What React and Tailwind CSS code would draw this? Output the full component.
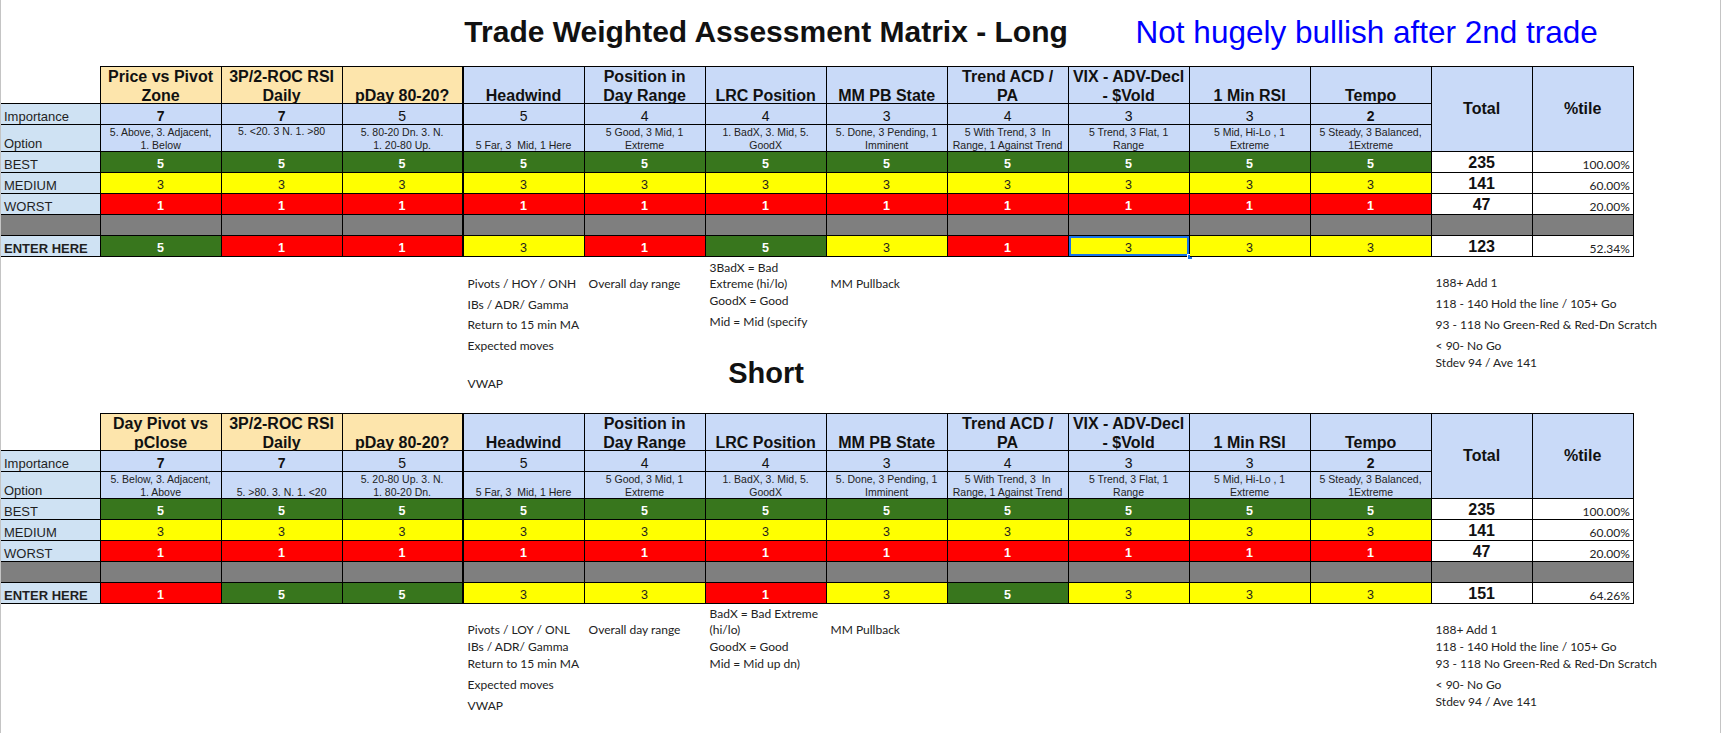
import React from "react";

const GRID = "grid grid-cols-[99.6px_repeat(11,121px)_101px_101.2px]";

const LONG_COLS = [
  { h: ["Price vs Pivot", "Zone"], imp: 7, opt: ["5. Above, 3. Adjacent,", "1. Below"], orange: true },
  { h: ["3P/2-ROC RSI", "Daily"], imp: 7, opt: ["5. <20. 3 N. 1. >80"], top: true, orange: true },
  { h: ["pDay 80-20?"], imp: 5, opt: ["5. 80-20 Dn. 3. N.", "1. 20-80 Up."], orange: true },
  { h: ["Headwind"], imp: 5, opt: ["5 Far, 3  Mid, 1 Here"] },
  { h: ["Position in", "Day Range"], imp: 4, opt: ["5 Good, 3 Mid, 1", "Extreme"] },
  { h: ["LRC Position"], imp: 4, opt: ["1. BadX, 3. Mid, 5.", "GoodX"] },
  { h: ["MM PB State"], imp: 3, opt: ["5. Done, 3 Pending, 1", "Imminent"] },
  { h: ["Trend ACD /", "PA"], imp: 4, opt: ["5 With Trend, 3  In", "Range, 1 Against Trend"] },
  { h: ["VIX - ADV-Decl", "- $Vold"], imp: 3, opt: ["5 Trend, 3 Flat, 1", "Range"] },
  { h: ["1 Min RSI"], imp: 3, opt: ["5 Mid, Hi-Lo , 1", "Extreme"] },
  { h: ["Tempo"], imp: 2, opt: ["5 Steady, 3 Balanced,", "1Extreme"] },
];

const SHORT_COLS = [
  { h: ["Day Pivot vs", "pClose"], imp: 7, opt: ["5. Below, 3. Adjacent,", "1. Above"], orange: true },
  { h: ["3P/2-ROC RSI", "Daily"], imp: 7, opt: ["5. >80. 3. N. 1. <20"], orange: true },
  { h: ["pDay 80-20?"], imp: 5, opt: ["5. 20-80 Up. 3. N.", "1. 80-20 Dn."], orange: true },
  ...LONG_COLS.slice(3),
];

const SCORE = {
  5: "bg-[#38761d] text-white font-bold",
  3: "bg-[#ffff00] text-[#1f1f1f]",
  1: "bg-[#ff0000] text-white font-bold",
};

const ALL5 = [5, 5, 5, 5, 5, 5, 5, 5, 5, 5, 5];
const ALL3 = [3, 3, 3, 3, 3, 3, 3, 3, 3, 3, 3];
const ALL1 = [1, 1, 1, 1, 1, 1, 1, 1, 1, 1, 1];

function LabelCell({ children, bold, gray }) {
  return (
    <div
      className={`flex items-end border-r border-b border-black pl-[3px] text-[13px] leading-[15px] text-[#1f1f1f] ${
        gray ? "bg-[#7f7f7f]" : "bg-[#cfe2f3]"
      } ${bold ? "font-bold" : ""}`}
    >
      {children}
    </div>
  );
}

function rb(i) {
  return i === 2 ? "border-r-2" : "border-r";
}

function ScoreRow({ label, bold, values, total, pct, selected }) {
  return (
    <>
      <LabelCell bold={bold}>{label}</LabelCell>
      {values.map((v, i) => (
        <div
          key={i}
          className={`relative flex items-end justify-center border-b border-black ${rb(i)} text-[12.5px] leading-[15px] ${SCORE[v]}`}
        >
          {v}
          {selected === i && (
            <>
              <div className="pointer-events-none absolute inset-0 border-2 border-[#1a73e8]" />
              <div className="absolute -bottom-[4px] -right-[4px] h-[6px] w-[6px] border border-white bg-[#1a73e8]" />
            </>
          )}
        </div>
      ))}
      <div className="flex items-end justify-center border-r border-b border-black bg-white text-[16px] font-bold leading-[19px] text-[#111]">
        {total}
      </div>
      <div className="flex items-end justify-end border-r border-b border-black bg-white pr-[3px] font-['Lato',sans-serif] text-[12px] leading-[14px] text-[#222]">
        {pct}
      </div>
    </>
  );
}

function Matrix({ cols, enter, total, pct, selected }) {
  return (
    <div
      className={`${GRID} grid-rows-[38.6px_21px_27px_21px_21px_21px_21px_21px] text-[#1f1f1f]`}
    >
      {/* header */}
      <div className="border-r border-b border-black bg-white" />
      {cols.map((c, i) => (
        <div
          key={i}
          className={`flex items-end justify-center border-t border-b border-black ${rb(i)} ${
            c.orange ? "bg-[#fde5ac]" : "bg-[#c9daf8]"
          } text-center text-[16px] font-bold leading-[19px] text-[#111]`}
        >
          <div className="-mb-[1.5px] whitespace-nowrap">
            {c.h.map((l, j) => (
              <div key={j}>{l}</div>
            ))}
          </div>
        </div>
      ))}
      <div className="row-span-3 flex items-center justify-center border-t border-r border-b border-black bg-[#c9daf8] text-[16px] font-bold text-[#111]">
        Total
      </div>
      <div className="row-span-3 flex items-center justify-center border-t border-r border-b border-black bg-[#c9daf8] text-[16px] font-bold text-[#111]">
        %tile
      </div>

      {/* importance */}
      <LabelCell>Importance</LabelCell>
      {cols.map((c, i) => (
        <div
          key={i}
          className={`flex items-end justify-center border-b border-black ${rb(i)} bg-[#c9daf8] text-[14px] leading-[16px] text-[#111] ${
            c.imp === 7 || c.imp === 2 ? "font-bold" : ""
          }`}
        >
          {c.imp}
        </div>
      ))}

      {/* option */}
      <LabelCell>Option</LabelCell>
      {cols.map((c, i) => (
        <div
          key={i}
          className={`flex ${c.top ? "items-start" : "items-end"} justify-center border-b border-black ${rb(i)} bg-[#c9daf8] text-center text-[10.5px] leading-[12.5px] text-[#222]`}
        >
          <div className="whitespace-pre">
            {c.opt.map((l, j) => (
              <div key={j}>{l}</div>
            ))}
          </div>
        </div>
      ))}

      <ScoreRow label="BEST" values={ALL5} total="235" pct="100.00%" />
      <ScoreRow label="MEDIUM" values={ALL3} total="141" pct="60.00%" />
      <ScoreRow label="WORST" values={ALL1} total="47" pct="20.00%" />

      {/* gray spacer row */}
      <LabelCell gray />
      {cols.map((c, i) => (
        <div key={i} className={`border-b border-black ${rb(i)} bg-[#7f7f7f]`} />
      ))}
      <div className="border-r border-b border-black bg-[#7f7f7f]" />
      <div className="border-r border-b border-black bg-[#7f7f7f]" />

      <ScoreRow label="ENTER HERE" bold values={enter} total={total} pct={pct} selected={selected} />
    </div>
  );
}

function Line({ className = "", children }) {
  return <div className={`whitespace-nowrap pl-[4px] leading-[16px] ${className}`}>{children}</div>;
}

function LongNotes() {
  return (
    <div className={`${GRID} h-[155.4px] font-['Lato',sans-serif] text-[12px] text-[#222]`}>
      <div className="col-start-5 row-start-1 flex flex-col">
        <Line className="mt-[18.7px]">Pivots / HOY / ONH</Line>
        <Line className="mt-[5px]">IBs / ADR/ Gamma</Line>
        <Line className="mt-[4px]">Return to 15 min MA</Line>
        <Line className="mt-[5px]">Expected moves</Line>
        <Line className="mt-[22px]">VWAP</Line>
      </div>
      <div className="col-start-6 row-start-1 flex flex-col">
        <Line className="mt-[18.7px]">Overall day range</Line>
      </div>
      <div className="col-start-7 row-start-1 flex flex-col">
        <Line className="mt-[2.7px]">3BadX = Bad</Line>
        <Line>Extreme (hi/lo)</Line>
        <Line className="mt-[1px]">GoodX = Good</Line>
        <Line className="mt-[5px]">Mid = Mid (specify</Line>
        <div className="mt-[27px] flex justify-center">
          <span className="whitespace-nowrap font-['Liberation_Sans',Arial,sans-serif] text-[29px] font-bold leading-[32px] text-[#111]">
            Short
          </span>
        </div>
      </div>
      <div className="col-start-8 row-start-1 flex flex-col">
        <Line className="mt-[18.7px]">MM Pullback</Line>
      </div>
      <div className="col-start-13 row-start-1 flex flex-col">
        <Line className="mt-[17.7px]">188+ Add 1</Line>
        <Line className="mt-[5px]">118 - 140 Hold the line / 105+ Go</Line>
        <Line className="mt-[5px]">93 - 118 No Green-Red &amp; Red-Dn Scratch</Line>
        <Line className="mt-[5px]">&lt; 90- No Go</Line>
        <Line className="mt-[1px]">Stdev 94 / Ave 141</Line>
      </div>
    </div>
  );
}

function ShortNotes() {
  return (
    <div className={`${GRID} h-[128px] font-['Lato',sans-serif] text-[12px] text-[#222]`}>
      <div className="col-start-5 row-start-1 flex flex-col">
        <Line className="mt-[17.3px]">Pivots / LOY / ONL</Line>
        <Line className="mt-[1px]">IBs / ADR/ Gamma</Line>
        <Line className="mt-[1px]">Return to 15 min MA</Line>
        <Line className="mt-[5px]">Expected moves</Line>
        <Line className="mt-[5px]">VWAP</Line>
      </div>
      <div className="col-start-6 row-start-1 flex flex-col">
        <Line className="mt-[17.3px]">Overall day range</Line>
      </div>
      <div className="col-start-7 row-start-1 flex flex-col">
        <Line className="mt-[1.3px]">BadX = Bad Extreme</Line>
        <Line>(hi/lo)</Line>
        <Line className="mt-[1px]">GoodX = Good</Line>
        <Line className="mt-[1px]">Mid = Mid up dn)</Line>
      </div>
      <div className="col-start-8 row-start-1 flex flex-col">
        <Line className="mt-[17.3px]">MM Pullback</Line>
      </div>
      <div className="col-start-13 row-start-1 flex flex-col">
        <Line className="mt-[17.3px]">188+ Add 1</Line>
        <Line className="mt-[1px]">118 - 140 Hold the line / 105+ Go</Line>
        <Line className="mt-[1px]">93 - 118 No Green-Red &amp; Red-Dn Scratch</Line>
        <Line className="mt-[5px]">&lt; 90- No Go</Line>
        <Line className="mt-[1px]">Stdev 94 / Ave 141</Line>
      </div>
    </div>
  );
}

export default function App() {
  return (
    <div className="h-[733px] w-[1721px] overflow-hidden border-l border-r border-[#c4c4c4] bg-white font-['Liberation_Sans',Arial,sans-serif]">
      <div className={`${GRID} h-[65.7px]`}>
        <div className="col-start-7 row-start-1 flex justify-center pt-[15px]">
          <span className="whitespace-nowrap text-[30px] font-bold leading-[34px] text-[#111]">
            Trade Weighted Assessment Matrix - Long
          </span>
        </div>
        <div className="col-span-5 col-start-10 row-start-1 pl-[67px] pt-[15px]">
          <span className="whitespace-nowrap text-[31.5px] leading-[34px] text-[#0000ff]">
            Not hugely bullish after 2nd trade
          </span>
        </div>
      </div>
      <Matrix cols={LONG_COLS} enter={[5, 1, 1, 3, 1, 5, 3, 1, 3, 3, 3]} total="123" pct="52.34%" selected={8} />
      <LongNotes />
      <Matrix cols={SHORT_COLS} enter={[1, 5, 5, 3, 3, 1, 3, 5, 3, 3, 3]} total="151" pct="64.26%" />
      <ShortNotes />
    </div>
  );
}
